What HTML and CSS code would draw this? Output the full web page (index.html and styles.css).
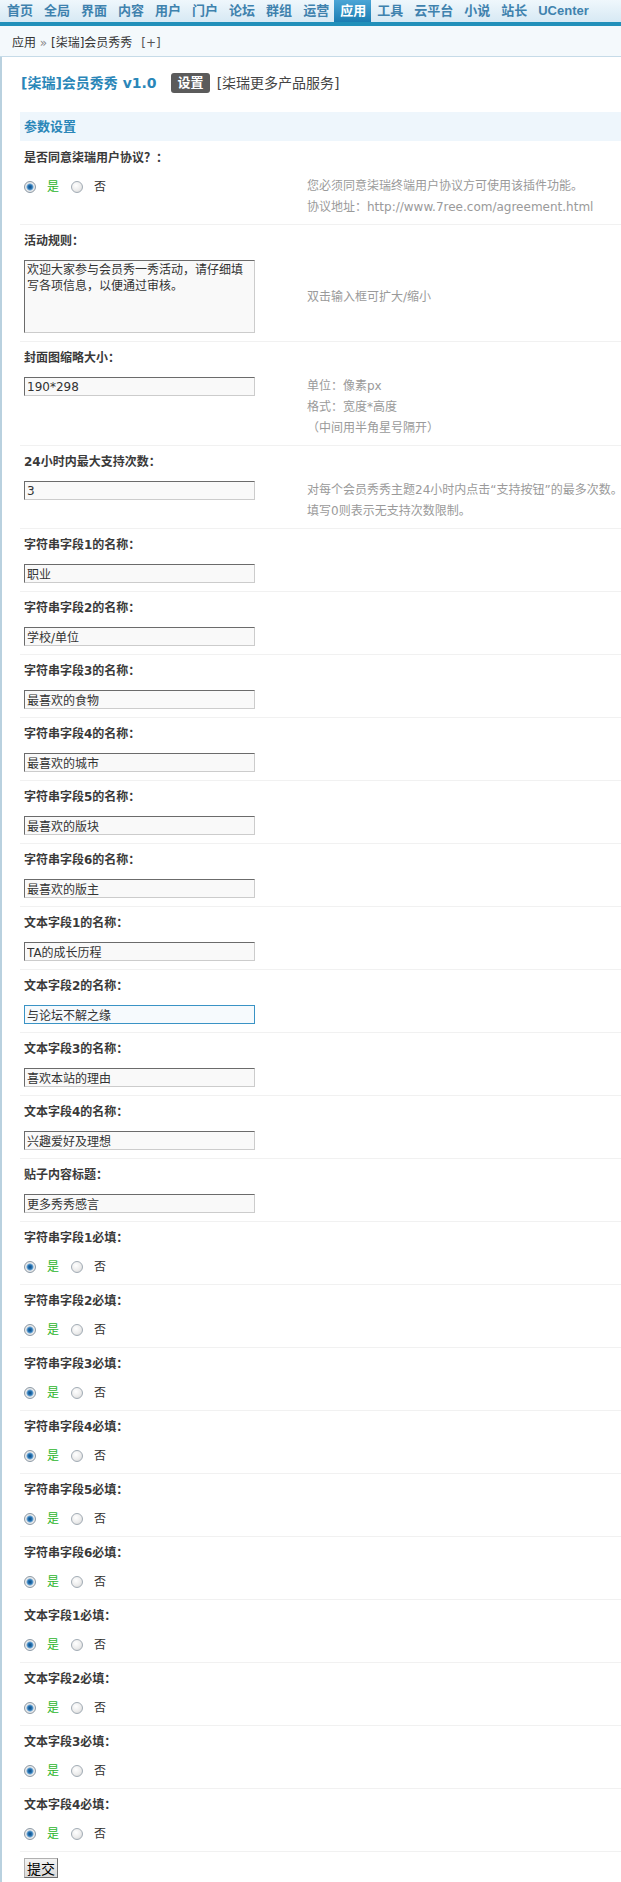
FILE: index.html
```html
<!DOCTYPE html>
<html lang="zh-CN">
<head>
<meta charset="utf-8">
<title>[柒瑞]会员秀秀</title>
<link rel="stylesheet" href="styles.css">
</head>
<body>
<div class="nav">
  <a>首页</a><a>全局</a><a>界面</a><a>内容</a><a>用户</a><a>门户</a><a>论坛</a><a>群组</a><a>运营</a><a class="on">应用</a><a>工具</a><a>云平台</a><a>小说</a><a>站长</a><a>UCenter</a>
</div>
<div class="bar"></div>
<div class="crumb">应用 <span class="raquo">»</span> [柒瑞]会员秀秀<span class="plus">[+]</span></div>

<div class="main">
  <div class="title">
    <h1>[柒瑞]会员秀秀 v1.0</h1>
    <span class="tag">设置</span>
    <span class="more">[柒瑞更多产品服务]</span>
  </div>
  <div class="sect">参数设置</div>

  <div class="row first">
    <div class="lbl">是否同意柒瑞用户协议？：</div>
    <div class="ctl">
      <div class="field"><div class="opts"><label class="opt"><input type="radio" name="r0" checked><span class="yes">是</span></label><label class="opt"><input type="radio" name="r0"><span>否</span></label></div></div>
      <div class="tips">您必须同意柒瑞终端用户协议方可使用该插件功能。<br>协议地址：http://www.7ree.com/agreement.html</div>
    </div>
  </div>

  <div class="row">
    <div class="lbl">活动规则：</div>
    <div class="ctl">
      <div class="field"><textarea class="area">欢迎大家参与会员秀一秀活动，请仔细填写各项信息，以便通过审核。</textarea></div>
      <div class="tips">双击输入框可扩大/缩小</div>
    </div>
  </div>

  <div class="row">
    <div class="lbl">封面图缩略大小：</div>
    <div class="ctl">
      <div class="field"><input class="txt" type="text" value="190*298"></div>
      <div class="tips">单位：像素px<br>格式：宽度*高度<br>（中间用半角星号隔开）</div>
    </div>
  </div>

  <div class="row">
    <div class="lbl">24小时内最大支持次数：</div>
    <div class="ctl">
      <div class="field"><input class="txt" type="text" value="3"></div>
      <div class="tips">对每个会员秀秀主题24小时内点击“支持按钮”的最多次数。<br>填写0则表示无支持次数限制。</div>
    </div>
  </div>

  <div class="row"><div class="lbl">字符串字段1的名称：</div><div class="ctl"><div class="field"><input class="txt" type="text" value="职业"></div></div></div>
  <div class="row"><div class="lbl">字符串字段2的名称：</div><div class="ctl"><div class="field"><input class="txt" type="text" value="学校/单位"></div></div></div>
  <div class="row"><div class="lbl">字符串字段3的名称：</div><div class="ctl"><div class="field"><input class="txt" type="text" value="最喜欢的食物"></div></div></div>
  <div class="row"><div class="lbl">字符串字段4的名称：</div><div class="ctl"><div class="field"><input class="txt" type="text" value="最喜欢的城市"></div></div></div>
  <div class="row"><div class="lbl">字符串字段5的名称：</div><div class="ctl"><div class="field"><input class="txt" type="text" value="最喜欢的版块"></div></div></div>
  <div class="row"><div class="lbl">字符串字段6的名称：</div><div class="ctl"><div class="field"><input class="txt" type="text" value="最喜欢的版主"></div></div></div>
  <div class="row"><div class="lbl">文本字段1的名称：</div><div class="ctl"><div class="field"><input class="txt" type="text" value="TA的成长历程"></div></div></div>
  <div class="row"><div class="lbl">文本字段2的名称：</div><div class="ctl"><div class="field"><input class="txt focus" type="text" value="与论坛不解之缘"></div></div></div>
  <div class="row"><div class="lbl">文本字段3的名称：</div><div class="ctl"><div class="field"><input class="txt" type="text" value="喜欢本站的理由"></div></div></div>
  <div class="row"><div class="lbl">文本字段4的名称：</div><div class="ctl"><div class="field"><input class="txt" type="text" value="兴趣爱好及理想"></div></div></div>
  <div class="row"><div class="lbl">贴子内容标题：</div><div class="ctl"><div class="field"><input class="txt" type="text" value="更多秀秀感言"></div></div></div>

  <div class="row"><div class="lbl">字符串字段1必填：</div><div class="ctl"><div class="field"><div class="opts"><label class="opt"><input type="radio" name="r1" checked><span class="yes">是</span></label><label class="opt"><input type="radio" name="r1"><span>否</span></label></div></div></div></div>
  <div class="row"><div class="lbl">字符串字段2必填：</div><div class="ctl"><div class="field"><div class="opts"><label class="opt"><input type="radio" name="r2" checked><span class="yes">是</span></label><label class="opt"><input type="radio" name="r2"><span>否</span></label></div></div></div></div>
  <div class="row"><div class="lbl">字符串字段3必填：</div><div class="ctl"><div class="field"><div class="opts"><label class="opt"><input type="radio" name="r3" checked><span class="yes">是</span></label><label class="opt"><input type="radio" name="r3"><span>否</span></label></div></div></div></div>
  <div class="row"><div class="lbl">字符串字段4必填：</div><div class="ctl"><div class="field"><div class="opts"><label class="opt"><input type="radio" name="r4" checked><span class="yes">是</span></label><label class="opt"><input type="radio" name="r4"><span>否</span></label></div></div></div></div>
  <div class="row"><div class="lbl">字符串字段5必填：</div><div class="ctl"><div class="field"><div class="opts"><label class="opt"><input type="radio" name="r5" checked><span class="yes">是</span></label><label class="opt"><input type="radio" name="r5"><span>否</span></label></div></div></div></div>
  <div class="row"><div class="lbl">字符串字段6必填：</div><div class="ctl"><div class="field"><div class="opts"><label class="opt"><input type="radio" name="r6" checked><span class="yes">是</span></label><label class="opt"><input type="radio" name="r6"><span>否</span></label></div></div></div></div>
  <div class="row"><div class="lbl">文本字段1必填：</div><div class="ctl"><div class="field"><div class="opts"><label class="opt"><input type="radio" name="r7" checked><span class="yes">是</span></label><label class="opt"><input type="radio" name="r7"><span>否</span></label></div></div></div></div>
  <div class="row"><div class="lbl">文本字段2必填：</div><div class="ctl"><div class="field"><div class="opts"><label class="opt"><input type="radio" name="r8" checked><span class="yes">是</span></label><label class="opt"><input type="radio" name="r8"><span>否</span></label></div></div></div></div>
  <div class="row"><div class="lbl">文本字段3必填：</div><div class="ctl"><div class="field"><div class="opts"><label class="opt"><input type="radio" name="r9" checked><span class="yes">是</span></label><label class="opt"><input type="radio" name="r9"><span>否</span></label></div></div></div></div>
  <div class="row"><div class="lbl">文本字段4必填：</div><div class="ctl"><div class="field"><div class="opts"><label class="opt"><input type="radio" name="r10" checked><span class="yes">是</span></label><label class="opt"><input type="radio" name="r10"><span>否</span></label></div></div></div></div>

  <div class="foot"><button class="btn" type="button">提交</button></div>
</div>
</body>
</html>
```

FILE: styles.css
```css
* { box-sizing: border-box; }
html, body { margin: 0; padding: 0; background: #fff; }
body {
  font: 12px/18px "DejaVu Sans", "Noto Sans CJK SC", sans-serif;
  color: #333;
}

/* top navigation */
.nav {
  display: flex;
  height: 22px;
  padding-left: 1px;
  background: linear-gradient(#eff7fc, #d7e9f4);
}
.nav a {
  padding: 0 5px 0 6px;
  font: bold 13px/22px "Liberation Sans", "Noto Sans CJK SC", sans-serif;
  color: #3f82ae;
  text-decoration: none;
  white-space: nowrap;
}
.nav a.on {
  color: #fff;
  background: linear-gradient(#4ba5d6, #1b7db2);
}
.bar { height: 4px; background: #2190ba; }

.crumb {
  height: 31px;
  padding: 5px 0 0 12px;
  line-height: 24px;
  background: #f4f9fc;
  border-bottom: 1px solid #c6dbe8;
  color: #333;
}
.crumb .raquo { color: #8a8a8a; }
.crumb .plus { margin-left: 9px; color: #555; }

/* main area */
.main {
  border-left: 2px solid #b9d1df;
  padding: 15px 0 6px 18px;
}
.title {
  display: flex;
  align-items: center;
  height: 22px;
  margin-left: 1px;
}
.title h1 {
  margin: 0;
  font: bold 14px/22px "DejaVu Sans", "Noto Sans CJK SC", sans-serif;
  color: #2a86b8;
}
.tag {
  margin-left: 14px;
  height: 20px;
  padding: 0 6px 0 7px;
  border-radius: 3px;
  background: #5b5b5b;
  color: #fff;
  font: bold 13px/20px "DejaVu Sans", "Noto Sans CJK SC", sans-serif;
}
.more {
  margin-left: 7px;
  font-size: 14px;
  line-height: 20px;
  color: #444;
}

.sect {
  margin-top: 18px;
  height: 29px;
  padding-left: 4px;
  background: #eef6fc;
  font: bold 13px/29px "DejaVu Sans", "Noto Sans CJK SC", sans-serif;
  color: #2a86b8;
}

/* settings rows */
.row {
  border-top: 1px solid #f1f1f1;
  padding: 0 0 4px 4px;
}
.row.first { border-top-color: transparent; }
.lbl {
  padding-top: 7px;
  line-height: 18px;
  font-weight: bold;
  color: #3a3a3a;
}
.ctl {
  display: grid;
  grid-template-columns: 283px 1fr;
  align-items: center;
  margin-top: 8px;
}
.field {
  align-self: start;
  padding: 2px 0 4px;
}
.tips {
  padding: 1px 0 2px;
  line-height: 21px;
  color: #9a9a9a;
  white-space: nowrap;
}

.txt, .area {
  display: block;
  width: 231px;
  margin: 0;
  padding: 0 2px;
  border: 1px solid;
  border-color: #6b6b6b #cccccc #cccccc #6b6b6b;
  background: #f9f9f9;
  color: #333;
  font: 12px/17px "DejaVu Sans", "Noto Sans CJK SC", sans-serif;
  outline: none;
}
.txt { height: 19px; }
.txt.focus {
  border-color: #3a93c5;
  background: #f6fafd;
}
.area {
  height: 73px;
  padding: 1px 2px;
  line-height: 16px;
  resize: none;
  overflow: hidden;
}

/* radios */
.opts {
  display: flex;
  align-items: center;
  height: 19px;
}
.opt {
  display: flex;
  align-items: center;
  margin-right: 12px;
}
.opt input {
  -webkit-appearance: none;
  appearance: none;
  width: 12px;
  height: 12px;
  margin: 0 11px 0 0;
  border-radius: 50%;
  border: 1px solid #a2acb5;
  background: radial-gradient(circle at 40% 35%, #ffffff 0, #ececec 55%, #cfcfcf 100%);
}
.opt input:checked {
  border-color: #8d9aa6;
  background: radial-gradient(circle, #0e4a80 0, #2a78b8 2.2px, #86b3d8 3.2px, #eeeeee 4px, #d2d2d2 100%);
}
.opt span { line-height: 18px; color: #333; }
.opt span.yes { color: #2cb52c; }

.foot {
  border-top: 1px solid #f1f1f1;
  padding: 6px 0 0 4px;
}
.btn {
  display: block;
  height: 20px;
  margin: 0;
  padding: 0 2px;
  border: 1px solid;
  border-color: #b0b0b0 #6f6f6f #6f6f6f #b0b0b0;
  background: linear-gradient(#f3f3f3, #dadada);
  color: #000;
  font: 14px/18px "Noto Sans CJK SC", sans-serif;
}
```
